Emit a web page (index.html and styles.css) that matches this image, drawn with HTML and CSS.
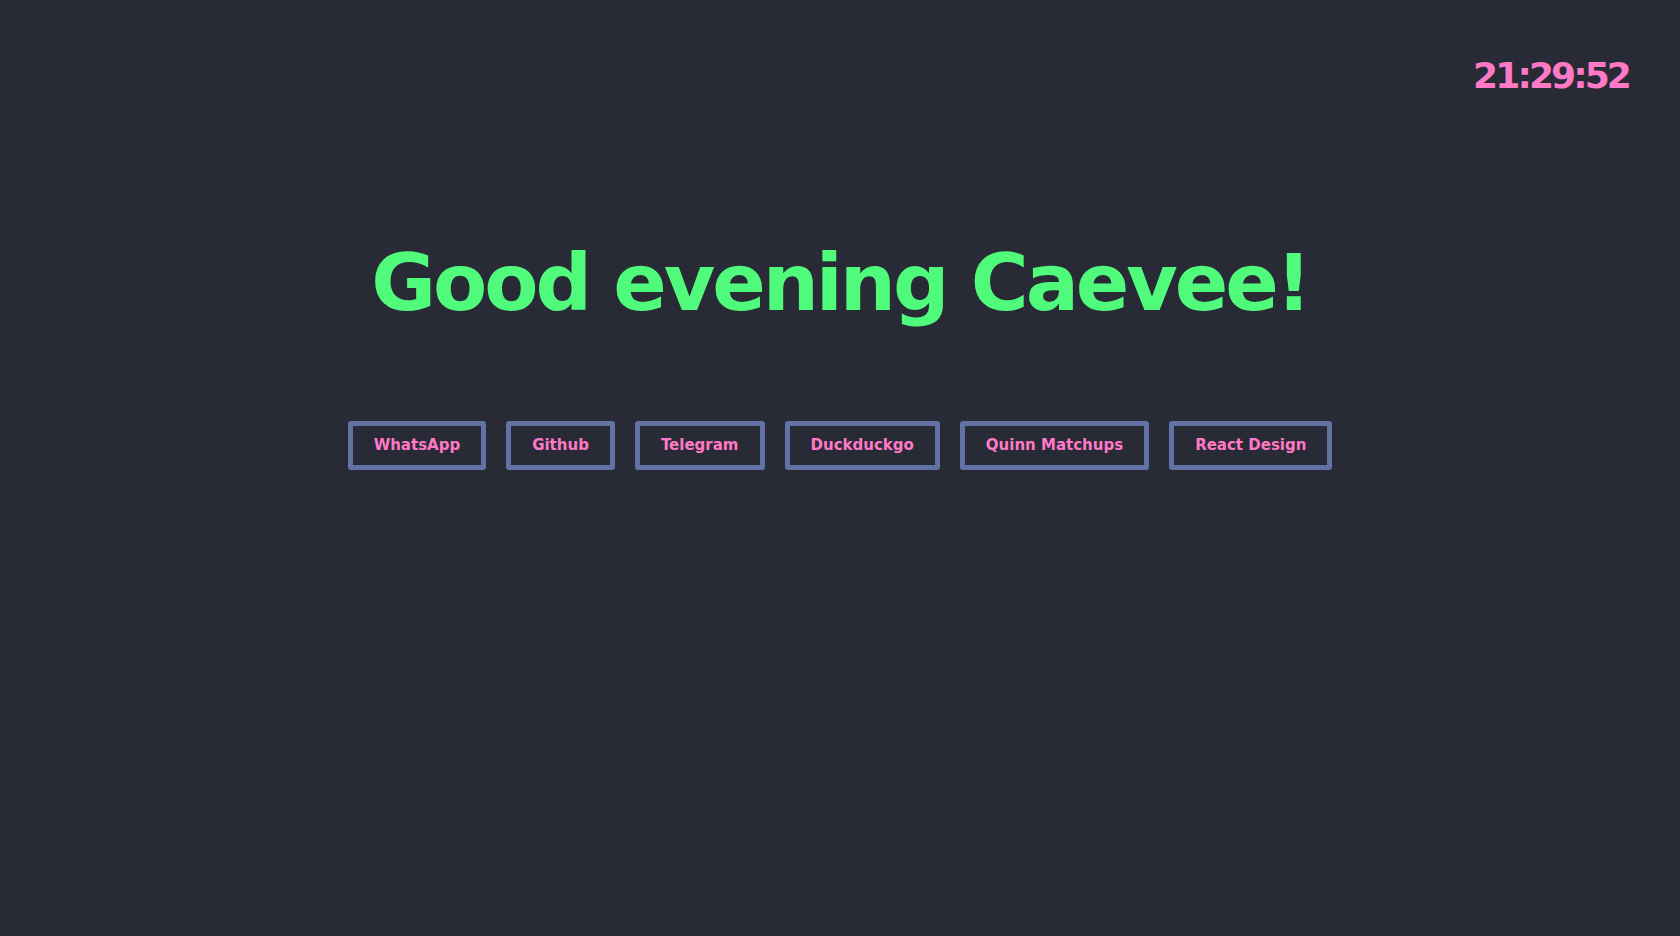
FILE: index.html
```html
<!DOCTYPE html>
<html lang="en">
<head>
<meta charset="utf-8">
<title>Home</title>
<link rel="stylesheet" href="styles.css">
</head>
<body>
<header class="top">
  <div class="clock">21:29:52</div>
</header>
<main class="main">
  <h1 class="greeting">Good evening Caevee!</h1>
  <nav class="links">
    <a class="link" href="#">WhatsApp</a>
    <a class="link" href="#">Github</a>
    <a class="link" href="#">Telegram</a>
    <a class="link" href="#">Duckduckgo</a>
    <a class="link" href="#">Quinn Matchups</a>
    <a class="link" href="#">React Design</a>
  </nav>
</main>
</body>
</html>
```
FILE: styles.css
```css
html, body {
  margin: 0;
  padding: 0;
  height: 100%;
}
body {
  background: #282a36;
  font-family: "DejaVu Sans", "Noto Sans", sans-serif;
  font-weight: 700;
}
.top {
  display: flex;
  justify-content: flex-end;
  padding: 58px 51px 0 0;
}
.clock {
  color: #ff79c6;
  font-size: 36px;
  line-height: 36px;
  letter-spacing: -2.9px;
}
.main {
  display: flex;
  flex-direction: column;
  align-items: center;
  padding-top: 150px;
}
.greeting {
  margin: 0;
  color: #50fa7b;
  font-size: 79px;
  line-height: 79px;
  letter-spacing: -3.1px;
  font-weight: 700;
}
.links {
  display: flex;
  gap: 20px;
  margin-top: 98px;
}
.link {
  display: block;
  border: 5px solid #6272a4;
  border-radius: 3px;
  padding: 10px 21px;
  color: #ff79c6;
  font-size: 15px;
  line-height: 19px;
  text-decoration: none;
}
```
